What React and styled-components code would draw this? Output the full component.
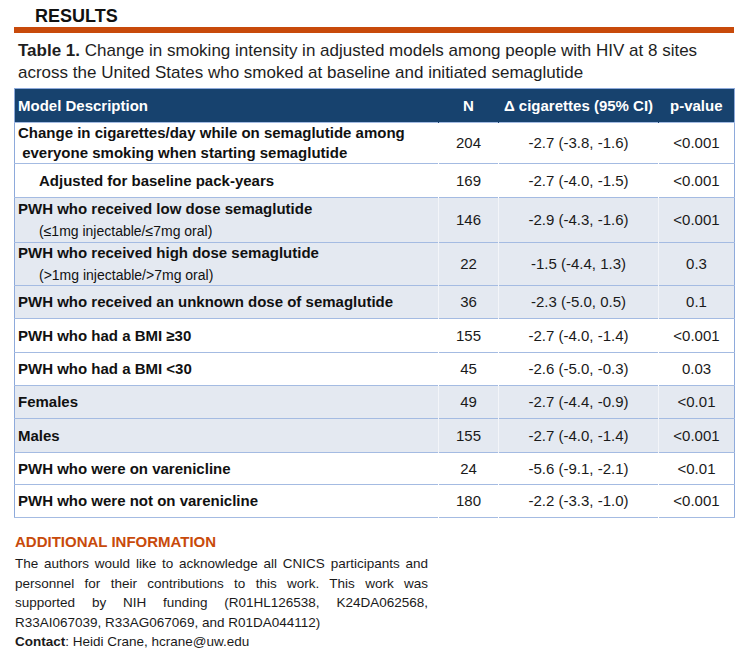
import styled, { createGlobalStyle } from 'styled-components';

const GlobalStyle = createGlobalStyle`
    body {
        margin: 0;
        background: #ffffff;
        font-family: "Liberation Sans", Arial, sans-serif;
        color: #161616;
    }
`

const Page = styled.div`
    width: 750px;
    height: 668px;
    padding-top: 6px;
    box-sizing: border-box;
`

const Heading = styled.h2`
    margin: 0 0 0 35px;
    font-size: 18px;
    line-height: 20px;
    font-weight: bold;
    color: #111;
`

const Rule = styled.div`
    margin: 1px 16px 0 14px;
    height: 6px;
    background: #c84a0b;
`

const Caption = styled.p`
    margin: 7px 0 0 18px;
    width: 700px;
    font-size: 17px;
    line-height: 22px;
    color: #1e1e1e;

    b {
        font-weight: bold;
    }
`

const Table = styled.table`
    margin: 4px 0 0 14px;
    width: 721px;
    border-collapse: collapse;
    table-layout: fixed;
    border-left: 1px solid #8eaadb;
    border-right: 1px solid #8eaadb;
    font-size: 15px;
`

const HeadRow = styled.tr`
    height: 34px;
    background: #17426e;
`

const HeadCell = styled.th`
    padding: 0 3px;
    color: #ffffff;
    font-weight: bold;
    text-align: ${(p) => (p.$left ? 'left' : 'center')};
    border-top: 1px solid #8eaadb;
`

const Row = styled.tr`
    background: ${(p) => (p.$shade ? '#e4e9f1' : '#ffffff')};
    border-top: 1px solid #a4bbe2;

    &:last-child {
        border-bottom: 1px solid #a4bbe2;
    }
`

const Cell = styled.td`
    padding: 0;
    text-align: center;
    vertical-align: middle;
    line-height: 20px;
    color: #1a1a1a;
    border-left: 1px solid ${(p) => (p.$shade ? '#f3f5f9' : 'transparent')};
`

const DescCell = styled.td`
    padding: 0 0 0 ${(p) => (p.$indent ? '24px' : '3px')};
    vertical-align: middle;
    font-weight: bold;
    line-height: 20px;
    color: #111;
`

const Sub = styled.div`
    margin-top: 3px;
    padding-left: 21px;
    font-size: 14px;
    font-weight: normal;
    line-height: 19px;
`

const Info = styled.section`
    margin: 14px 0 0 15px;
    width: 413px;
`

const InfoTitle = styled.h3`
    margin: 0 0 2px;
    font-size: 15px;
    line-height: 20px;
    font-weight: bold;
    color: #c84a0b;
`

const InfoText = styled.p`
    margin: 0;
    font-size: 13.5px;
    line-height: 19.5px;
    text-align: justify;
    color: #1a1a1a;
`

const Contact = styled.p`
    margin: 0;
    font-size: 13.5px;
    line-height: 19.5px;
    color: #1a1a1a;
`

const rows = [
    { lines: ['Change in cigarettes/day while on semaglutide among', '\u00a0everyone smoking when starting semaglutide'], n: '204', ci: '-2.7 (-3.8, -1.6)', p: '<0.001', h: 40 },
    { title: 'Adjusted for baseline pack-years', indent: true, n: '169', ci: '-2.7 (-4.0, -1.5)', p: '<0.001', h: 34 },
    { title: 'PWH who received low dose semaglutide', sub: '(\u22641mg injectable/\u22647mg oral)', shade: true, n: '146', ci: '-2.9 (-4.3, -1.6)', p: '<0.001', h: 45 },
    { title: 'PWH who received high dose semaglutide', sub: '(>1mg injectable/>7mg oral)', shade: true, n: '22', ci: '-1.5 (-4.4, 1.3)', p: '0.3', h: 43 },
    { title: 'PWH who received an unknown dose of semaglutide', shade: true, n: '36', ci: '-2.3 (-5.0, 0.5)', p: '0.1', h: 33 },
    { title: 'PWH who had a BMI \u226530', n: '155', ci: '-2.7 (-4.0, -1.4)', p: '<0.001', h: 34 },
    { title: 'PWH who had a BMI <30', n: '45', ci: '-2.6 (-5.0, -0.3)', p: '0.03', h: 33 },
    { title: 'Females', shade: true, n: '49', ci: '-2.7 (-4.4, -0.9)', p: '<0.01', h: 33 },
    { title: 'Males', shade: true, n: '155', ci: '-2.7 (-4.0, -1.4)', p: '<0.001', h: 34 },
    { title: 'PWH who were on varenicline', n: '24', ci: '-5.6 (-9.1, -2.1)', p: '<0.01', h: 32 },
    { title: 'PWH who were not on varenicline', n: '180', ci: '-2.2 (-3.3, -1.0)', p: '<0.001', h: 33 },
]

const App = () => {
    return (
        <Page>
            <GlobalStyle />
            <Heading>RESULTS</Heading>
            <Rule />
            <Caption>
                <b>Table 1.</b> Change in smoking intensity in adjusted models among people with HIV at 8 sites
                across the United States who smoked at baseline and initiated semaglutide
            </Caption>

            <Table>
                <colgroup>
                    <col style={{ width: 424 }} />
                    <col style={{ width: 60 }} />
                    <col style={{ width: 160 }} />
                    <col style={{ width: 76 }} />
                </colgroup>
                <thead>
                    <HeadRow>
                        <HeadCell $left>Model Description</HeadCell>
                        <HeadCell>N</HeadCell>
                        <HeadCell>{'\u0394'} cigarettes (95% CI)</HeadCell>
                        <HeadCell>p-value</HeadCell>
                    </HeadRow>
                </thead>
                <tbody>
                    {rows.map((row, i) => (
                        <Row key={i} $shade={row.shade} style={{ height: row.h }}>
                            <DescCell $indent={row.indent}>
                                {row.lines ? row.lines.map((l) => <div key={l}>{l}</div>) : row.title}
                                {row.sub && <Sub>{row.sub}</Sub>}
                            </DescCell>
                            <Cell $shade={row.shade}>{row.n}</Cell>
                            <Cell $shade={row.shade}>{row.ci}</Cell>
                            <Cell $shade={row.shade}>{row.p}</Cell>
                        </Row>
                    ))}
                </tbody>
            </Table>

            <Info>
                <InfoTitle>ADDITIONAL INFORMATION</InfoTitle>
                <InfoText>
                    The authors would like to acknowledge all CNICS participants and personnel for their
                    contributions to this work. This work was supported by NIH funding (R01HL126538,
                    K24DA062568, R33AI067039, R33AG067069, and R01DA044112)
                </InfoText>
                <Contact><b>Contact</b>: Heidi Crane, hcrane@uw.edu</Contact>
            </Info>
        </Page>
    );
}

export default App;
